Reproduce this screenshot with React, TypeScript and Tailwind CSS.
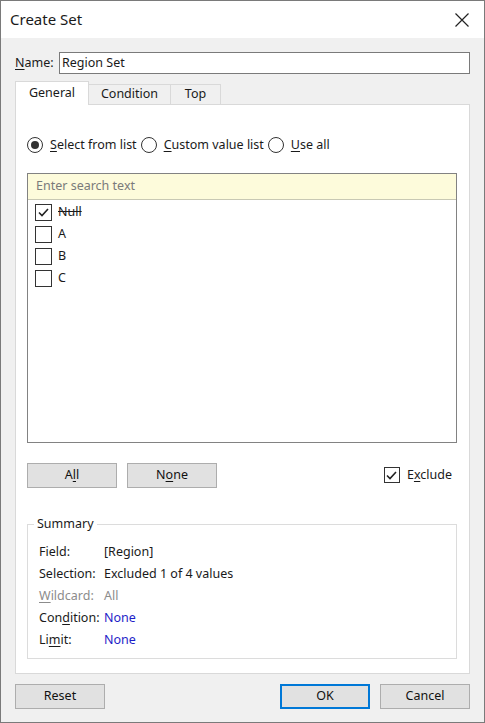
import { useState } from 'react';

const font = { fontFamily: '"Noto Sans", "Segoe UI", sans-serif' };

// Letter that gets the keyboard-shortcut underline
const U = ({ children }: { children: string }) => <span className="underline underline-offset-2">{children}</span>;

const Radio = ({ checked }: { checked?: boolean }) => (
  <span className="flex h-[16px] w-[16px] items-center justify-center rounded-full border border-[#333] bg-white">
    {checked && <span className="h-[8px] w-[8px] rounded-full bg-[#333]" />}
  </span>
);

const Check = ({ checked, size = 17 }: { checked?: boolean; size?: number }) => (
  <span
    className="flex items-center justify-center border border-[#333] bg-white"
    style={{ width: size, height: size }}
  >
    {checked && (
      <svg width="11" height="9" viewBox="0 0 11 9" fill="none">
        <path d="M1 4.5 L4 7.5 L10 1" stroke="#222" strokeWidth="1.6" />
      </svg>
    )}
  </span>
);

const Button = ({ children, primary }: { children: React.ReactNode; primary?: boolean }) => (
  <button
    className={
      'flex h-[25px] w-[90px] items-center justify-center bg-[#e1e1e1] text-[12.5px] text-[#111] ' +
      (primary ? 'border-2 border-[#0078d7]' : 'border border-[#adadad]')
    }
  >
    {children}
  </button>
);

const items = [
  { label: 'Null', checked: true },
  { label: 'A', checked: false },
  { label: 'B', checked: false },
  { label: 'C', checked: false },
];

const summary: { label: React.ReactNode; value: string; tone: string }[] = [
  { label: 'Field:', value: '[Region]', tone: 'text-[#1a1a1a]' },
  { label: 'Selection:', value: 'Excluded 1 of 4 values', tone: 'text-[#1a1a1a]' },
  { label: <><U>W</U>ildcard:</>, value: 'All', tone: 'text-[#8c8c8c]' },
  { label: <>Con<U>d</U>ition:</>, value: 'None', tone: 'text-[#1e1ec8]' },
  { label: <>Li<U>m</U>it:</>, value: 'None', tone: 'text-[#1e1ec8]' },
];

export default function App() {
  const [tab] = useState('General');

  return (
    <div className="flex h-[723px] w-[485px] flex-col border border-[#7a7a7a] bg-[#f0f0f0] text-[12.5px] text-[#1a1a1a]" style={font}>
      {/* title bar */}
      <div className="flex h-[37px] shrink-0 items-center justify-between bg-white pl-[9px] pr-[15px]">
        <span className="text-[15px]">Create Set</span>
        <svg width="14" height="14" viewBox="0 0 14 14">
          <path d="M0.5 0.5 L13.5 13.5 M13.5 0.5 L0.5 13.5" stroke="#222" strokeWidth="1.2" />
        </svg>
      </div>

      <div className="flex flex-1 flex-col px-[14px]">
        {/* name */}
        <div className="mt-[14px] flex items-center">
          <span className="w-[44px]"><U>N</U>ame:</span>
          <div className="flex h-[22px] flex-1 items-center border border-[#7a7a7a] bg-white px-[2px]">Region Set</div>
        </div>

        {/* tabs */}
        <div className="mt-[7px] flex h-[24px] items-end">
          {['General', 'Condition', 'Top'].map((t) => (
            <div
              key={t}
              className={
                'flex items-center justify-center border border-[#d9d9d9] ' +
                (t === tab
                  ? 'relative z-10 h-[24px] w-[74px] border-b-0 bg-white'
                  : 'h-[21px] border-l-0 bg-[#f0f0f0] ' + (t === 'Condition' ? 'w-[82px]' : 'w-[50px]'))
              }
            >
              {t}
            </div>
          ))}
        </div>

        {/* tab panel */}
        <div className="-mt-px flex h-[570px] flex-col border border-[#d9d9d9] bg-white pl-[11px] pr-[12px]">
          <div className="mt-[31px] flex items-center">
            <Radio checked />
            <span className="ml-[7px]"><U>S</U>elect from list</span>
            <span className="ml-[4px]"><Radio /></span>
            <span className="ml-[7px]"><U>C</U>ustom value list</span>
            <span className="ml-[4px]"><Radio /></span>
            <span className="ml-[7px]"><U>U</U>se all</span>
          </div>

          {/* value list */}
          <div className="mt-[18px] flex h-[270px] flex-col border border-[#828282]">
            <div className="flex h-[26px] items-center border-b border-[#c8c8b4] bg-[#fdfbdb] px-[8px] text-[#7a7a7a]">
              Enter search text
            </div>
            <div className="flex flex-col pl-[7px] pt-[2px]">
              {items.map((it) => (
                <div key={it.label} className="flex h-[22px] items-center gap-[6px]">
                  <Check checked={it.checked} />
                  <span className={it.checked ? 'line-through' : ''}>{it.label}</span>
                </div>
              ))}
            </div>
          </div>

          <div className="mt-[20px] flex items-center">
            <Button>A<U>l</U>l</Button>
            <span className="ml-[10px]"><Button>N<U>o</U>ne</Button></span>
            <div className="ml-auto mr-[5px] flex items-center gap-[7px]">
              <Check checked size={16} />
              <span>E<U>x</U>clude</span>
            </div>
          </div>

          {/* summary group */}
          <div className="relative mt-[36px] h-[135px] border border-[#dcdcdc]">
            <span className="absolute -top-[10px] left-[6px] bg-white px-[3px]">Summary</span>
            <div className="flex flex-col pl-[11px] pt-[17px]">
              {summary.map((r, i) => (
                <div key={i} className="flex h-[22px] items-center">
                  <span className={'w-[65px] ' + (i === 2 ? 'text-[#8c8c8c]' : '')}>{r.label}</span>
                  <span className={r.tone}>{r.value}</span>
                </div>
              ))}
            </div>
          </div>
        </div>

        {/* footer */}
        <div className="mt-[10px] flex items-center">
          <Button>Reset</Button>
          <div className="ml-auto flex gap-[10px]">
            <Button primary>OK</Button>
            <Button>Cancel</Button>
          </div>
        </div>
      </div>
    </div>
  );
}
